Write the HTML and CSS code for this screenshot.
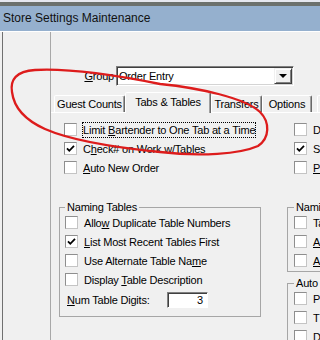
FILE: index.html
```html
<!DOCTYPE html>
<html lang="en">
<head>
  <meta charset="UTF-8">
  <title>Store Settings Maintenance</title>
  <link rel="stylesheet" href="styles.css">
</head>
<body>
  <div class="topbar"></div>
  <div class="titlebar">Store Settings Maintenance</div>

  <div class="frame">
    <div class="panel">
      <!-- Group picker -->
      <div class="group-row">
        <label class="group-label"><u>G</u>roup</label>
        <div class="combo">
          <span>Order Entry</span>
          <span class="drop"><span class="arrow"></span></span>
        </div>
      </div>

      <!-- Tab strip -->
      <div class="tabs">
        <div class="tab t1">Guest Counts</div>
        <div class="tab t2 active">Tabs &amp; Tables</div>
        <div class="tab t3">Transfers</div>
        <div class="tab t4">Options</div>
        <div class="tab t5"></div>
      </div>

      <!-- Tab page: Tabs & Tables -->
      <div class="page">
        <div class="col left">
          <div class="check top"><span class="box"></span><span class="text focus">Limit <u>B</u>artender to One Tab at a Time</span></div>
          <div class="check top"><span class="box"><svg class="tick" viewBox="0 0 11 11"><path d="M2 5.3 L4.3 7.8 L9 2.8"/></svg></span><span class="text">C<u>h</u>eck# on Work w/Tables</span></div>
          <div class="check top"><span class="box"></span><span class="text"><u>A</u>uto New Order</span></div>

          <fieldset class="grp naming">
            <legend>Naming Tables</legend>
            <div class="check"><span class="box"></span><span class="text">Allo<u>w</u> Duplicate Table Numbers</span></div>
            <div class="check"><span class="box"><svg class="tick" viewBox="0 0 11 11"><path d="M2 5.3 L4.3 7.8 L9 2.8"/></svg></span><span class="text"><u>L</u>ist Most Recent Tables First</span></div>
            <div class="check"><span class="box"></span><span class="text">Use Alternate Table Na<u>m</u>e</span></div>
            <div class="check"><span class="box"></span><span class="text">Display <u>T</u>able Description</span></div>
            <div class="digits">
              <span class="digits-label"><u>N</u>um Table Digits:</span>
              <span class="num">3</span>
            </div>
          </fieldset>
        </div>

        <div class="col right">
          <div class="check top"><span class="box"></span><span class="text">D</span></div>
          <div class="check top"><span class="box"><svg class="tick" viewBox="0 0 11 11"><path d="M2 5.3 L4.3 7.8 L9 2.8"/></svg></span><span class="text">S</span></div>
          <div class="check top"><span class="box"></span><span class="text"><u>P</u></span></div>

          <fieldset class="grp naming-tabs">
            <legend>Nami</legend>
            <div class="check"><span class="box"></span><span class="text">Ta</span></div>
            <div class="check"><span class="box"></span><span class="text"><u>A</u></span></div>
            <div class="check"><span class="box"></span><span class="text"><u>A</u></span></div>
          </fieldset>

          <fieldset class="grp auto">
            <legend>Auto</legend>
            <div class="check"><span class="box"></span><span class="text">P</span></div>
            <div class="check"><span class="box"></span><span class="text">T</span></div>
            <div class="check"><span class="box"></span><span class="text">D</span></div>
          </fieldset>
        </div>
      </div>
    </div>
  </div>

  <!-- red marker scribble drawn over the dialog -->
  <svg class="scribble" viewBox="0 0 320 340" width="320" height="340">
    <path d="M160 84 C120 76 70 68 35 70 C16 71 10 80 12 92 C14 108 25 120 45 129 C70 140 110 147 160 152 C200 157 240 154 258 146 C270 138 270 122 260 112 C245 98 200 88 160 84"/>
  </svg>
</body>
</html>
```

FILE: styles.css
```css
body {
  margin: 0;
  width: 320px;
  height: 340px;
  overflow: hidden;
  position: relative;
  background-color: #f0f0f0;
  font-family: "Liberation Sans", Arial, sans-serif;
  font-size: 11px;
  letter-spacing: -0.2px;
  color: #000;
}
u {
  text-decoration: underline;
}

/* window chrome */
.topbar {
  height: 6px;
  background: linear-gradient(#e6e8ef 0 2px, #6c716d 2px 6px);
}
.titlebar {
  height: 25px;
  line-height: 25px;
  padding-left: 3px;
  background-color: #95b0ce;
  border-bottom: 1px solid #fff;
  font-size: 12px;
  letter-spacing: 0;
  color: #111;
}
.frame {
  margin-left: 2px;
  height: 308px;
  border-left: 1px solid #707070;
}
.panel {
  margin-left: 47px;
  height: 100%;
  padding-top: 34px;
  box-sizing: border-box;
  border-left: 1px solid #a8a8a8;
  overflow: hidden;
}

/* group combo */
.group-row {
  display: flex;
  align-items: center;
  height: 20px;
}
.group-label {
  width: 64px;
  padding-right: 1px;
  box-sizing: border-box;
  text-align: right;
}
.combo {
  margin-left: 1px;
  width: 178px;
  height: 20px;
  box-sizing: border-box;
  display: flex;
  align-items: center;
  padding-left: 2px;
  background-color: #fff;
  border: 1px solid;
  border-color: #808080 #fff #fff #808080;
  box-shadow: inset 1px 1px 0 #404040, inset -1px -1px 0 #d4d4d4;
}
.drop {
  margin-left: auto;
  margin-right: 1px;
  width: 18px;
  height: 16px;
  box-sizing: border-box;
  display: flex;
  align-items: center;
  justify-content: center;
  background-color: #f0f0f0;
  border: 1px solid;
  border-color: #f0f0f0 #404040 #404040 #f0f0f0;
  box-shadow: inset 1px 1px 0 #fff, inset -1px -1px 0 #808080;
}
.arrow {
  width: 0;
  height: 0;
  border-left: 4px solid transparent;
  border-right: 4px solid transparent;
  border-top: 4px solid #000;
}

/* tabs */
.tabs {
  display: flex;
  align-items: flex-end;
  height: 21px;
  margin-top: 6px;
  padding-left: 3px;
  background: linear-gradient(to top, #fff 1px, transparent 1px);
}
.tab {
  flex: none;
  height: 17px;
  line-height: 16px;
  margin-bottom: 1px;
  box-sizing: border-box;
  text-align: center;
  white-space: nowrap;
  background-color: #f0f0f0;
  border: 1px solid;
  border-bottom: none;
  border-color: #fff #696969 transparent #fff;
  border-radius: 2px 2px 0 0;
  box-shadow: inset -1px 0 0 #a0a0a0;
}
.tab.active {
  height: 21px;
  line-height: 18px;
  margin-bottom: 0;
}
.t1 { width: 71px; }
.t2 { width: 86px; }
.t3 { width: 51px; }
.t4 { width: 50px; }
.t5 { width: 20px; margin-left: 5px; }

/* tab page */
.page {
  display: grid;
  grid-template-columns: 202px 60px;
  gap: 26px;
  padding: 7px 0 0 8px;
}
.check {
  display: flex;
  align-items: center;
  height: 19px;
  white-space: nowrap;
}
.left .check.top {
  margin-left: 5px;
}
.right .check.top {
  margin-left: 7px;
}
.box {
  flex: none;
  width: 13px;
  height: 13px;
  box-sizing: border-box;
  margin-right: 6px;
  background-color: #fff;
  border: 1px solid;
  border-color: #8e8e8e #c4c4c4 #c4c4c4 #8e8e8e;
}
.tick {
  display: block;
  width: 11px;
  height: 11px;
}
.tick path {
  fill: none;
  stroke: #000;
  stroke-width: 1.8;
}
.focus {
  padding: 2px 1px;
  margin-left: -1px;
  outline: 1px dotted #000;
  outline-offset: -1px;
}

/* group boxes */
.grp {
  margin: 24px 0 0;
  padding: 0 0 6px 5px;
  min-width: 0;
  border: 1px solid #a6a6a6;
}
.grp legend {
  padding: 0 2px;
  line-height: 12px;
}
.right .grp {
  padding-left: 6px;
  padding-bottom: 1px;
}
.right .grp.auto {
  margin-top: 5px;
}
.digits {
  display: flex;
  align-items: center;
  height: 21px;
  padding-left: 2px;
}
.digits-label {
  width: 100px;
}
.num {
  width: 41px;
  height: 16px;
  box-sizing: border-box;
  line-height: 14px;
  text-align: right;
  padding-right: 4px;
  background-color: #fff;
  border: 1px solid;
  border-color: #808080 #fff #fff #808080;
  box-shadow: inset 1px 1px 0 #404040;
}

/* marker scribble overlay */
.scribble {
  position: absolute;
  top: 0;
  left: 0;
  pointer-events: none;
}
.scribble path {
  fill: none;
  stroke: #dd1c1c;
  stroke-width: 2.3;
  stroke-linecap: round;
}
```
